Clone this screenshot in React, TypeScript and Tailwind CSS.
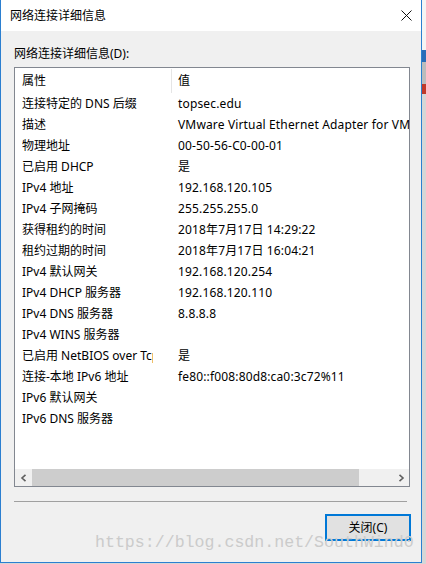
import React from "react";

const rows: [string, string][] = [
  ["连接特定的 DNS 后缀", "topsec.edu"],
  ["描述", "VMware Virtual Ethernet Adapter for VMnet8"],
  ["物理地址", "00-50-56-C0-00-01"],
  ["已启用 DHCP", "是"],
  ["IPv4 地址", "192.168.120.105"],
  ["IPv4 子网掩码", "255.255.255.0"],
  ["获得租约的时间", "2018年7月17日 14:29:22"],
  ["租约过期的时间", "2018年7月17日 16:04:21"],
  ["IPv4 默认网关", "192.168.120.254"],
  ["IPv4 DHCP 服务器", "192.168.120.110"],
  ["IPv4 DNS 服务器", "8.8.8.8"],
  ["IPv4 WINS 服务器", ""],
  ["已启用 NetBIOS over Tcpip", "是"],
  ["连接-本地 IPv6 地址", "fe80::f008:80d8:ca0:3c72%11"],
  ["IPv6 默认网关", ""],
  ["IPv6 DNS 服务器", ""],
];

const font = {
  fontFamily: '"Noto Sans", "Noto Sans CJK SC", sans-serif',
};

export default function App() {
  return (
    <div
      className="relative flex w-[426px] h-[564px] bg-[#d6d6d6] overflow-hidden text-[12px] text-black"
      style={font}
    >
      <div className="flex flex-col w-[422px] h-[563px] bg-[#f0f0f0] border-l border-r border-b border-[#2b7fd0] shrink-0">
        {/* Title bar */}
        <div className="flex items-center justify-between h-[31px] bg-white pl-[9px] pr-[8px] shrink-0">
          <span className="leading-[16px]">网络连接详细信息</span>
          <svg width="11" height="11" viewBox="0 0 11 11" className="mr-[1px]">
            <path d="M0.5 0.5 L10.5 10.5 M10.5 0.5 L0.5 10.5" stroke="#111" strokeWidth="1" />
          </svg>
        </div>

        {/* Body */}
        <div className="flex flex-col pl-[13px] pt-[15px]">
          <div className="h-[16px] leading-[16px]">网络连接详细信息(D):</div>

          <div className="mt-[5px] flex flex-col w-[396px] h-[420px] border border-[#828790] bg-white">
            {/* header */}
            <div className="flex h-[25px] shrink-0">
              <div className="w-[156px] pl-[7px] flex items-center">属性</div>
              <div className="w-px mt-[1px] bg-[#e5e5e5]" />
              <div className="flex-1 pl-[6px] flex items-center">值</div>
            </div>
            {rows.map(([k, v], i) => (
              <div key={i} className="flex h-[21px] shrink-0 items-center">
                <div className="w-[157px] pl-[7px] pr-[19px]">
                  <div className="whitespace-nowrap overflow-hidden">{k}</div>
                </div>
                <div className="flex-1 pl-[6px] whitespace-nowrap overflow-hidden tracking-[0.15px]">{v}</div>
              </div>
            ))}
            <div className="flex-1" />
            {/* horizontal scrollbar */}
            <div className="flex h-[17px] bg-[#f0f0f0] shrink-0">
              <div className="w-[17px] flex items-center justify-center">
                <svg width="8" height="8" viewBox="0 0 8 8">
                  <path d="M5.5 0.8 L2 4 L5.5 7.2" stroke="#606060" strokeWidth="1.6" fill="none" />
                </svg>
              </div>
              <div className="w-[327px] bg-[#cdcdcd]" />
              <div className="flex-1" />
              <div className="w-[17px] flex items-center justify-center">
                <svg width="8" height="8" viewBox="0 0 8 8">
                  <path d="M2.5 0.8 L6 4 L2.5 7.2" stroke="#606060" strokeWidth="1.6" fill="none" />
                </svg>
              </div>
            </div>
          </div>

          <div className="mt-[14px] w-[393px] h-px bg-[#a0a0a0]" />

          <div className="flex justify-end w-[397px] mt-[12px]">
            <button
              className="w-[86px] h-[27px] border-2 border-[#0078d7] bg-[#e1e1e1] flex items-center justify-center leading-[16px]"
              style={font}
            >
              关闭(C)
            </button>
          </div>
        </div>
      </div>

      {/* desktop strip behind the window's right edge */}
      <div className="flex flex-col flex-1">
        <div className="h-[50px] bg-[#f4f4f4]" />
        <div className="h-[12px] bg-[#2a6cb8]" />
        <div className="h-[22px] bg-[#bcbcbc]" />
        <div className="h-[10px] bg-[#c0392b]" />
        <div className="flex-1 bg-[#d6d6d6]" />
      </div>

      {/* watermark */}
      <div
        className="absolute left-[95px] top-[532px] text-[16.6px] leading-[22px] text-[#cbcbcb] whitespace-nowrap pointer-events-none"
        style={{ fontFamily: '"Liberation Mono", monospace' }}
      >
        https://blog.csdn.net/SouthWind0
      </div>
    </div>
  );
}
